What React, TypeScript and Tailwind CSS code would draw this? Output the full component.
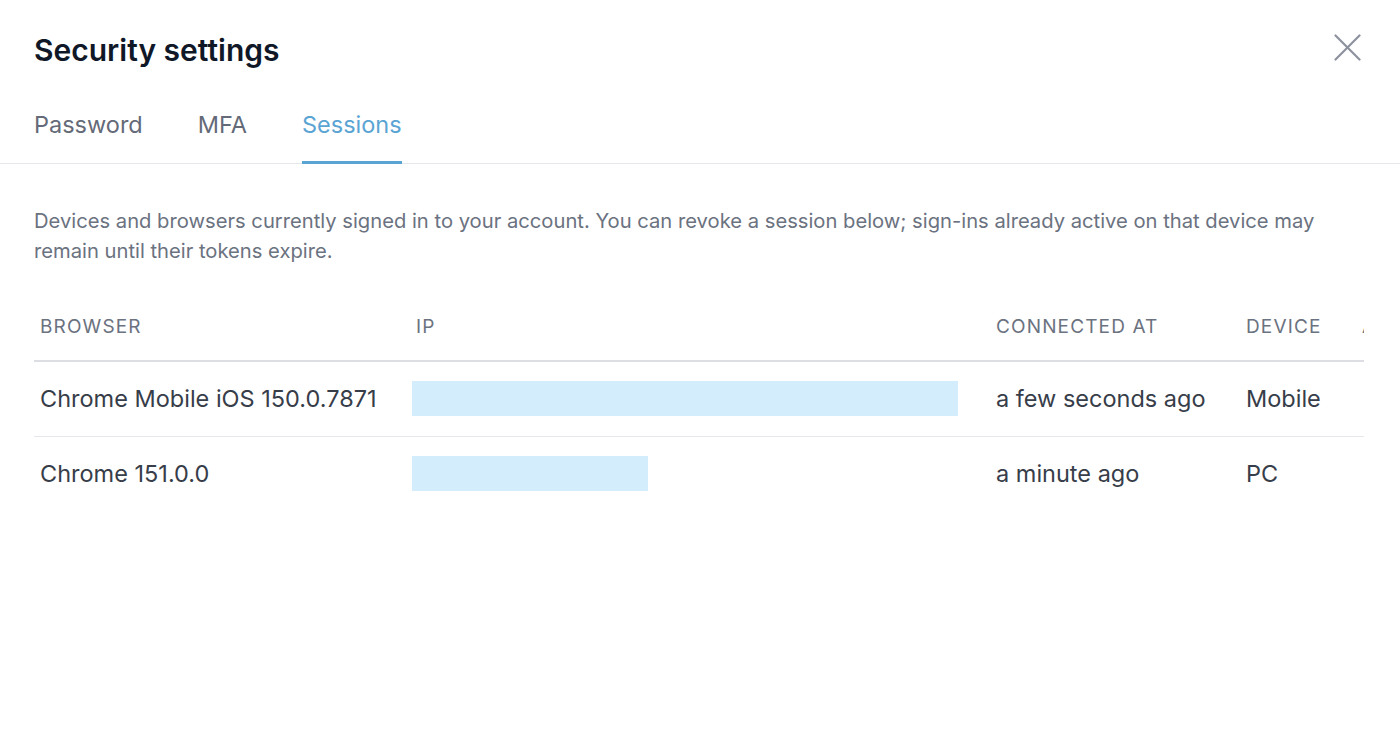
import React from 'react'

type Session = { browser: string; ipWidth: number; connected: string; device: string }

const sessions: Session[] = [
  { browser: 'Chrome Mobile iOS 150.0.7871', ipWidth: 546, connected: 'a few seconds ago', device: 'Mobile' },
  { browser: 'Chrome 151.0.0', ipWidth: 236, connected: 'a minute ago', device: 'PC' },
]

const tabs = ['Password', 'MFA', 'Sessions']

function CloseIcon() {
  return (
    <svg width="27" height="27" viewBox="0 0 27 27" fill="none" stroke="#8b909c" strokeWidth="2.2" strokeLinecap="round">
      <line x1="1.5" y1="1.5" x2="25.5" y2="25.5" />
      <line x1="25.5" y1="1.5" x2="1.5" y2="25.5" />
    </svg>
  )
}

export default function App() {
  return (
    <div className="min-h-[735px] w-[1400px] bg-white font-['Inter','Noto_Sans',sans-serif] overflow-hidden">
      {/* header */}
      <div className="flex items-start justify-between px-[34px] pt-8">
        <h1 className="h-9 text-[30px] font-semibold leading-9 text-[#101828]">Security settings</h1>
        <button className="mr-[5px] mt-[2px]" aria-label="Close">
          <CloseIcon />
        </button>
      </div>

      {/* tabs */}
      <div className="mt-[30px] border-b border-[#e5e7eb] px-[34px]">
        <div className="-mb-px flex gap-[55px]">
          {tabs.map((t) => (
            <button
              key={t}
              className={
                t === 'Sessions'
                  ? 'border-b-[3px] border-[#5aa4d4] pt-[12px] pb-[21px] text-[23.5px] leading-[30px] text-[#5aa4d4]'
                  : 'border-b-[3px] border-transparent pt-[12px] pb-[21px] text-[23.5px] leading-[30px] text-[#646a78]'
              }
            >
              {t}
            </button>
          ))}
        </div>
      </div>

      {/* body */}
      <div className="px-[34px] pt-[42px]">
        <p className="text-[20.2px] leading-[30px] text-[#6b7280]">
          Devices and browsers currently signed in to your account. You can revoke a session below; sign-ins already active on that device may remain until their tokens expire.
        </p>

        <div className="mt-[25px] w-[1330px] overflow-hidden">
          <table className="w-[1500px] table-fixed border-collapse text-left">
            <colgroup>
              <col className="w-[376px]" />
              <col className="w-[580px]" />
              <col className="w-[250px]" />
              <col className="w-[116px]" />
              <col className="w-[178px]" />
            </colgroup>
            <thead>
              <tr className="h-[70px] border-b-2 border-[#dcdee3]">
                {['Browser', 'IP', 'Connected at', 'Device', 'Actions'].map((h) => (
                  <th key={h} className="px-[6px] pt-[4px] align-middle text-[19px] font-normal uppercase tracking-[0.06em] text-[#6b7280]">
                    {h}
                  </th>
                ))}
              </tr>
            </thead>
            <tbody>
              {sessions.map((s, i) => (
                <tr key={s.browser} className={i < sessions.length - 1 ? 'h-[75px] border-b border-[#e5e7eb]' : 'h-[75px]'}>
                  <td className="px-[6px] text-[23.5px] text-[#373d49]">{s.browser}</td>
                  <td className="pl-[2px] pr-[6px]">
                    <div className="h-[35px] bg-[#d3edfc]" style={{ width: s.ipWidth }} />
                  </td>
                  <td className="px-[6px] text-[23.5px] text-[#373d49]">{s.connected}</td>
                  <td className="px-[6px] text-[23.5px] text-[#373d49]">{s.device}</td>
                  <td className="px-[6px]" />
                </tr>
              ))}
            </tbody>
          </table>
        </div>
      </div>
    </div>
  )
}
